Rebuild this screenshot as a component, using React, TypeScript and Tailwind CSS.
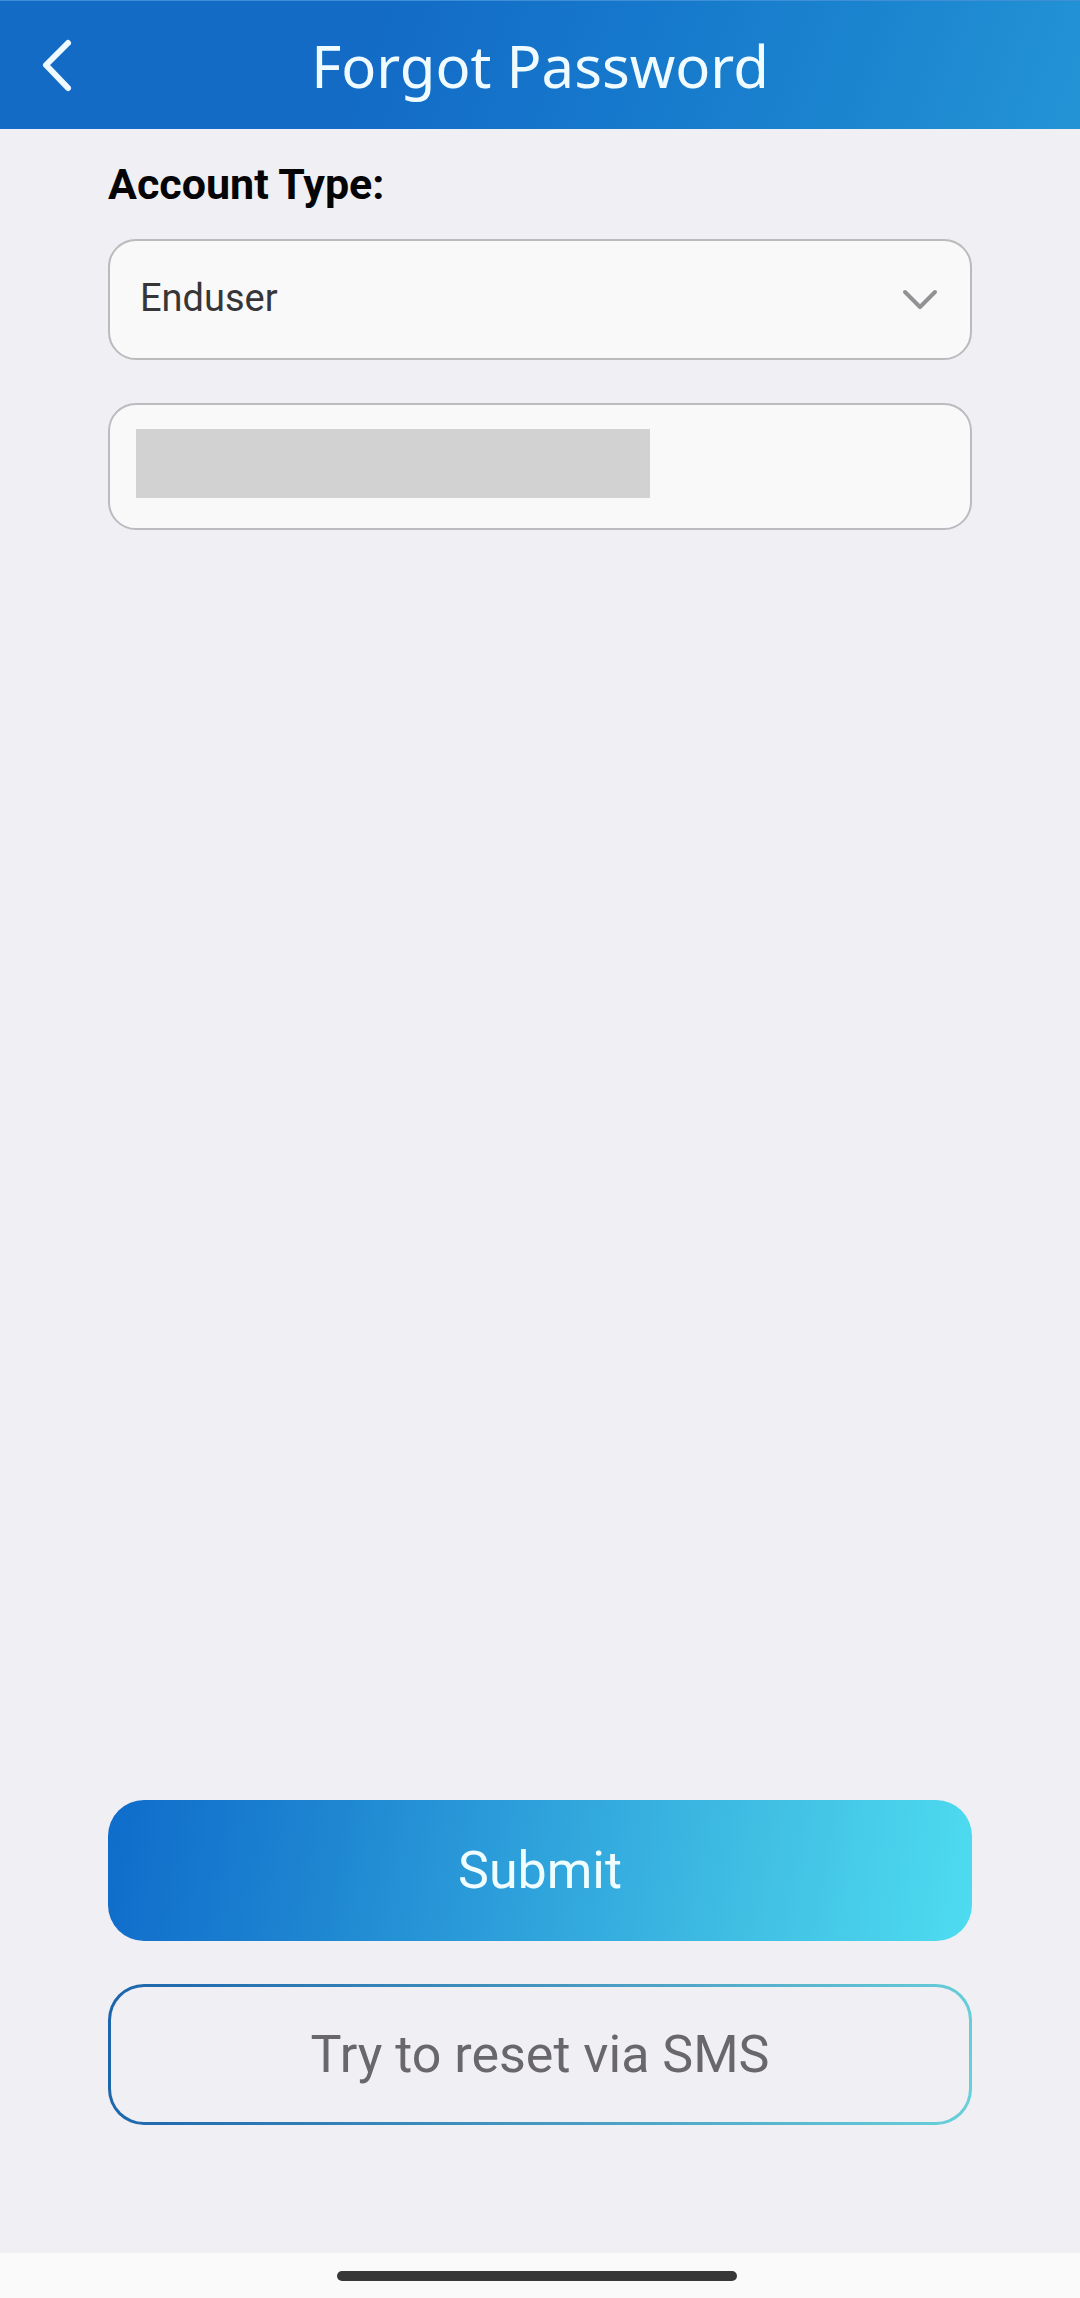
export default function App() {
  return (
    <div className="flex min-h-screen flex-col bg-[#efeff4] font-[Roboto,sans-serif]">
      <header className="grid h-[129px] grid-cols-[1fr_auto_1fr] items-center border-t border-[#3f8fd8] bg-[linear-gradient(110deg,#136bc6_0%,#136bc6_34%,#1576cb_54%,#1b84cf_78%,#2494d6_100%)]">
        <button type="button" aria-label="Back" className="flex h-full w-28 items-center pl-10">
          <svg width="34" height="56" viewBox="0 0 34 56" fill="none" stroke="#effaff" strokeWidth="6" strokeLinecap="round" strokeLinejoin="round">
            <path d="M28 6 6 28 28 51" />
          </svg>
        </button>
        <h1 className="pt-0.5 font-['Noto_Sans',sans-serif] text-[58px] leading-[80px] whitespace-nowrap text-[#effbff]">Forgot Password</h1>
      </header>

      <main className="flex grow flex-col px-[10%]">
        <label htmlFor="account-type" className="mt-[30px] text-[43px] leading-[50px] font-bold text-[#050507]">
          Account Type:
        </label>
        <div className="relative mt-[30px]">
          <select
            id="account-type"
            className="h-[121px] w-full appearance-none rounded-[28px] border-2 border-[#bbbbbd] bg-[#f9f9fa] px-[30px] pb-0.5 text-[38px] text-[#363638]"
          >
            <option>Enduser</option>
          </select>
          <svg className="pointer-events-none absolute top-1/2 right-8 -translate-y-1/2" width="40" height="24" viewBox="0 0 40 24" fill="none" stroke="#929295" strokeWidth="4" strokeLinecap="round" strokeLinejoin="round">
            <path d="M5 4 20 19 35 4" />
          </svg>
        </div>

        <div className="relative mt-[43px]">
          <input
            type="text"
            aria-label="Account"
            className="block h-[127px] w-full rounded-[28px] border-2 border-[#bbbbc0] bg-[#f9f9fa] px-[30px] text-[38px] text-[#363638]"
          />
          <div className="pointer-events-none absolute top-[26px] left-7 h-[69px] w-[514px] bg-[#d2d2d2]" />
        </div>

        <div className="mt-auto mb-32 flex flex-col gap-[43px]">
          <button
            type="submit"
            className="h-[141px] rounded-[36px] bg-[linear-gradient(100deg,#0f6ccb_0%,#1e85d1_25%,#2fa3dc_50%,#41c0e4_75%,#4edcf0_100%)] text-[52px] text-[#effdff]"
          >
            Submit
          </button>
          <button type="button" className="flex h-[141px] rounded-[36px] bg-[linear-gradient(100deg,#1b64ab_0%,#4596c0_50%,#68d0da_100%)] p-[3px]">
            <span className="flex h-full w-full items-center justify-center rounded-[33px] bg-[#f0eff4] text-[52px] text-[#69676c]">
              Try to reset via SMS
            </span>
          </button>
        </div>
      </main>

      <footer className="flex h-[45px] justify-center bg-[#fafafb] pt-[18px] pr-[7px]">
        <div className="h-[10px] w-[400px] max-w-full rounded-full bg-[#373738]" />
      </footer>
    </div>
  );
}
